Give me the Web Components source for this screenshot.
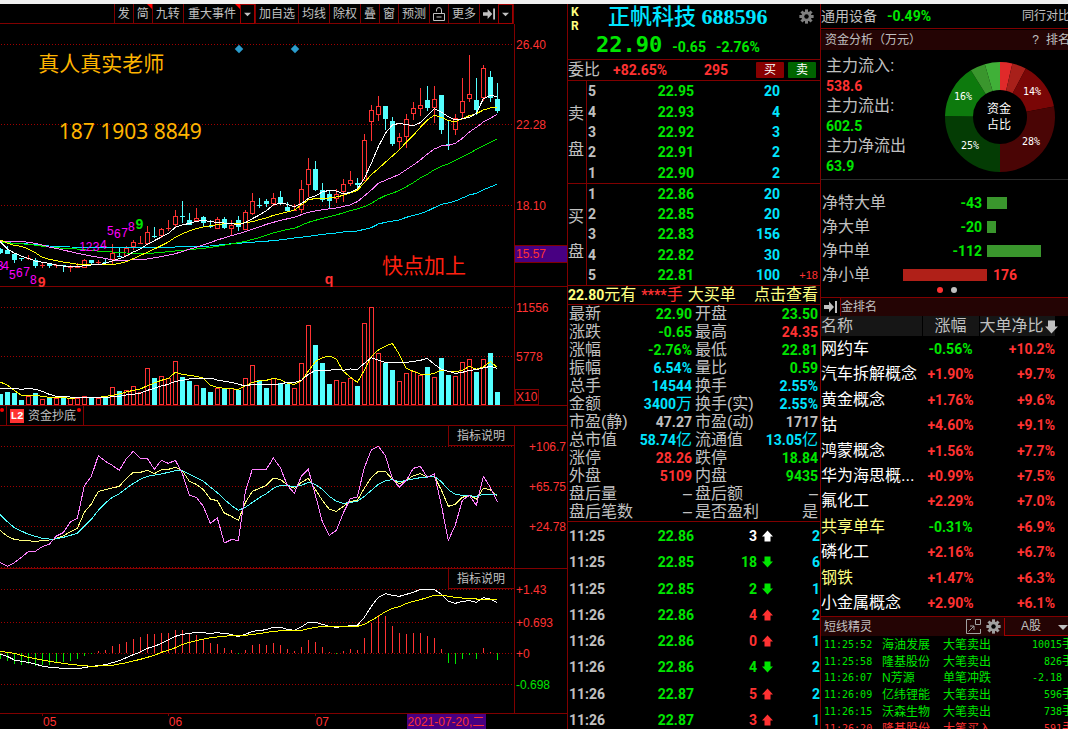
<!DOCTYPE html>
<html lang="zh-CN">
<head>
<meta charset="utf-8">
<title>正帆科技 688596</title>
<style>
html{background:#000}
body{margin:0;background:#000;overflow:hidden;
  --line:#800000;--gray:#c0c0c0;--red:#ff3232;--green:#00e600;--cyan:#00e5ff;--pale:#ffff80;--head:#240404;
  --ui:"Liberation Sans","Noto Sans CJK SC",sans-serif;
  --cn:"Liberation Sans","Noto Sans CJK SC",sans-serif;
  --num:Roboto,"Noto Sans CJK SC",sans-serif;
  --mono:"DejaVu Sans Mono","Noto Sans CJK SC",monospace}
</style>
</head>
<body>
<stock-terminal></stock-terminal>
<script>
const base = `*{box-sizing:border-box}
:host{display:block;flex:none;box-sizing:border-box;color:var(--gray);font:12px/16px var(--ui)}
button{margin:0;padding:0;border:0;background:none;color:inherit;font:inherit;cursor:pointer;white-space:nowrap}
a{color:inherit;text-decoration:none;white-space:nowrap}
table{border-collapse:collapse;border-spacing:0;width:100%}
td,th{padding:0;font-weight:inherit;text-align:left;white-space:nowrap}
i{font-style:normal}
.n{font:bold 14px/16px var(--num)}
.c{font:16px/18px var(--cn)}
.r{color:var(--red)}.g{color:var(--green)}.b{color:var(--cyan)}.w{color:#fff}.y{color:var(--pale)}.k{color:var(--gray)}`;

function define(name, css, html) {
  customElements.define(name, class extends HTMLElement {
    constructor() {
      super();
      this.attachShadow({mode: 'open'}).innerHTML =
        `<style>${base}${css}</style>` + (typeof html === 'function' ? html(this) : html);
    }
  });
}

const gear = (s, c) => `<svg width="${s}" height="${s}" viewBox="-10 -10 20 20" aria-hidden="true"><g fill="${c}">${
  [0,45,90,135].map(a => `<rect x="-2" y="-9.5" width="4" height="19" transform="rotate(${a})"/>`).join('')
  }</g><circle r="5" fill="none" stroke="${c}" stroke-width="3.6"/><circle r="3" fill="#000"/></svg>`;
const arrow = (dir, c) => `<svg width="11" height="12" viewBox="0 0 11 12" aria-hidden="true"><path fill="${c}" d="${
  dir === 'up' ? 'M5.5 0.5L11 6.5H8.5V11.5H2.5V6.5H0Z' : 'M5.5 11.5L0 5.5H2.5V0.5H8.5V5.5H11Z'}"/></svg>`;
const jump = `<svg width="13" height="12" viewBox="0 0 13 12" aria-hidden="true"><path fill="#c0c0c0" d="M0 4H5V0.5L10 6L5 11.5V8H0ZM11 0H13V12H11Z"/></svg>`;
const caret = `<svg width="8" height="5" viewBox="0 0 8 5" aria-hidden="true"><path fill="#c0c0c0" d="M0 0.5H8L4 4.5Z"/></svg>`;

/* ---------- toolbar ---------- */
define('chart-toolbar', `
:host{display:grid;grid-template-columns:minmax(0,1fr) 53px}
nav{display:flex;justify-content:flex-end;border-right:1px solid var(--line)}
button{position:relative;border:solid var(--line);border-width:0 0 1px 1px;padding:0 3px;font:12px/18px var(--cn);display:flex;align-items:center;justify-content:center}
.pad{flex:1;border-bottom:1px solid var(--line)}
.wide{padding:0 4px}
.drop{width:15px;border:1px solid #a00000}
.hot::after{content:"";position:absolute;right:0;top:0;border:0 solid transparent;border-left-width:5px;border-top:5px solid #f00}
.icon{width:19px}
`, `<nav><span class="pad"></span><button>发</button><button class="hot">简</button><button>九转</button><button class="wide hot">重大事件</button><button class="drop" aria-label="展开">${caret}</button><button>加自选</button><button>均线</button><button>除权</button><button>叠</button><button>窗</button><button>预测</button><button class="icon" aria-label="锁定"><svg width="12" height="14" viewBox="0 0 12 14"><path d="M0.5 6.5H11.5V13.5H0.5ZM3.5 4.5V3Q3.5 0.5 6 0.5T8.5 3V6.5M3.5 10H8.5" fill="none" stroke="#c0c0c0"/></svg></button><button>更多</button><button class="icon" aria-label="跳到最新">${jump}</button><button class="drop" aria-label="更多选项">${caret}</button></nav>`);

/* ---------- charts: one bar every 21 units, 3 units per pixel ---------- */
const STEP = 21;
const candles = `c744,747,760,762 c740,750,762,762 c762,762,780,789 c774,774,777,783 r765,774,777,780 c774,780,798,804 r790,795,798,804 c790,790,798,804 r792,795,798,804 c795,795,798,816 r797,801,804,816 r790,801,804,804 r778,780,803,803 c780,780,789,795 r780,786,789,792 c774,786,789,795 r732,759,781,795 c744,768,771,770 r738,744,768,768 r720,726,741,750 r708,729,732,732 r678,696,731,735 c681,708,711,714 r684,687,708,714 r660,684,687,692 r630,648,674,684 c603,648,651,668 c639,660,675,675 r624,654,663,664 c648,651,669,681 c660,678,681,684 r651,657,686,686 c651,657,685,687 r660,677,686,704 c648,660,681,692 r630,636,689,690 r579,603,643,645 c594,615,618,624 c597,603,612,622 r579,594,612,617 c573,591,612,615 c606,621,633,636 r612,630,633,633 r540,567,629,638 r474,507,554,592 c483,507,570,572 c549,570,599,606 c572,582,602,625 r567,582,596,608 r537,552,575,606 r513,540,551,558 c534,549,555,567 r402,420,542,544 r315,330,365,423 r288,318,344,363 c318,318,357,390 c351,363,432,438 r400,411,425,448 r342,357,410,444 r306,324,341,360 r264,315,326,348 c258,300,324,333 r258,297,323,368 c285,285,390,402 c363,432,435,450 r342,354,389,405 r234,303,338,356 r165,282,296,306 c234,300,329,345 r195,204,293,303 c213,231,293,306 c249,297,333,339`
  .split(' ').map(t => [t[0], ...t.slice(1).split(',').map(Number)]);
const volumes = [327,321,324,345,334,324,342,338,340,338,340,340,333,338,340,333,306,318,315,303,321,249,279,273,279,228,276,288,300,309,321,309,309,309,315,279,240,285,309,279,294,297,309,234,120,180,234,297,285,291,279,303,114,66,204,234,255,288,264,258,270,246,276,219,270,273,231,222,261,222,204,321];
const macd = [702,708,717,720,717,723,720,720,714,711,708,702,693,687,678,675,663,657,651,642,636,627,627,624,624,615,615,627,630,642,654,657,669,675,687,675,660,657,660,654,660,672,678,666,645,651,666,681,687,678,672,675,639,594,571,573,603,624,627,624,624,633,639,672,714,717,702,690,702,669,681,705];
const colour = {r: '#ff3232', c: '#54ffff'};
const snap = v => Math.floor(v / 3) * 3;

function candle([k, hi, top, bot, lo], i) {
  const x = i * STEP, t = snap(top), b = Math.max(t + 3, snap(bot + 1)), c = colour[k];
  const wick = (a, z) => z > a ? `<rect x="${x}" y="${a}" width="3" height="${z - a}" fill="${c}"/>` : '';
  const body = k === 'r' && b - t > 5
    ? `<rect x="${x - 4.5}" y="${t + 1.5}" width="12" height="${b - t - 3}" fill="none" stroke="${c}" vector-effect="non-scaling-stroke"/>`
    : `<rect x="${x - 6}" y="${t}" width="15" height="${b - t}" fill="${c}"/>`;
  return wick(snap(hi), t) + wick(b, snap(lo + 1)) + body;
}
function volume(v, i) {
  const k = candles[i][0], x = i * STEP, t = snap(v), c = colour[k];
  return k === 'r'
    ? `<rect x="${x - 4.5}" y="${t + 1.5}" width="12" height="${357 - t}" fill="#000" stroke="${c}" vector-effect="non-scaling-stroke"/>`
    : `<rect x="${x - 6}" y="${t}" width="15" height="${360 - t}" fill="${c}"/>`;
}
function stick(v, i) {
  const x = i * STEP, y = snap(v);
  return y < 684 ? `<rect x="${x}" y="${y}" width="3" height="${684 - y}" fill="#ff3232"/>`
                 : `<rect x="${x}" y="684" width="3" height="${Math.max(3, y - 684)}" fill="#00e600"/>`;
}
const panels = {
  price: {
    top: 72, height: 786, grid: [133, 373, 616],
    marks: () => candles.map(candle).join(''),
    lines: {
      '#00e5ff': '0,727 85,732 148,738 211,741 295,742 505,742 568,739 631,738 673,733 715,730 778,725 820,722 862,717 883,714 925,709 967,703 1009,699 1051,693 1072,693 1114,683 1135,672 1156,667 1198,660 1219,652 1261,641 1282,633 1324,613 1345,609 1366,603 1408,585 1429,580 1450,569 1471,561 1492,552',
      '#00e600': '0,727 43,730 85,733 148,741 190,745 232,747 274,752 337,756 379,759 421,760 463,759 505,755 547,751 610,745 652,739 694,732 736,724 778,713 820,699 862,688 883,685 925,667 967,655 1009,645 1051,632 1072,627 1093,620 1114,610 1135,597 1156,587 1177,580 1198,571 1219,560 1240,548 1261,534 1282,523 1303,509 1324,499 1345,492 1366,481 1387,471 1408,460 1429,448 1450,438 1471,427 1492,417',
      '#ff80ff': '0,724 64,724 106,730 127,735 148,741 190,750 232,760 274,768 316,775 337,780 358,782 442,777 484,770 526,761 568,748 610,735 652,720 694,707 736,695 778,681 799,673 841,661 883,652 904,644 925,637 967,629 1009,624 1050,615 1072,605 1093,588 1114,570 1135,550 1156,541 1177,532 1198,523 1219,509 1240,495 1261,480 1282,462 1303,447 1324,438 1345,436 1366,430 1387,415 1408,396 1429,382 1450,366 1471,355 1492,342',
      '#ffff00': '0,720 22,729 43,736 64,739 85,747 106,758 127,772 148,778 169,782 190,786 211,789 232,793 253,795 295,794 316,795 337,794 358,790 379,785 400,776 421,766 442,757 463,747 484,737 505,726 526,712 547,701 568,693 589,686 610,681 631,677 652,674 673,671 715,671 736,668 757,665 778,659 799,654 820,646 841,641 862,636 883,630 904,615 925,600 946,595 967,595 988,594 1009,591 1030,586 1051,579 1072,571 1093,548 1114,524 1135,506 1156,487 1177,468 1198,450 1219,426 1240,406 1261,382 1282,360 1303,346 1324,352 1345,362 1366,365 1387,356 1408,347 1429,341 1450,330 1471,324 1492,322',
      '#ffffff': '0,724 22,747 43,759 64,768 85,775 106,783 127,787 148,790 169,795 190,798 211,800 240,799 253,797 274,795 295,794 316,790 337,783 358,776 379,768 400,756 421,747 442,733 463,722 484,711 505,700 526,682 547,675 568,670 589,664 610,661 631,665 652,667 673,669 694,671 715,674 736,668 757,656 778,645 799,632 820,615 841,609 862,613 883,620 904,611 925,595 946,588 967,576 988,571 1009,573 1030,582 1051,577 1072,567 1093,535 1114,490 1135,440 1156,400 1177,375 1198,370 1219,374 1240,377 1261,368 1282,347 1303,326 1324,336 1345,350 1366,360 1387,356 1408,352 1429,340 1450,296 1471,286 1492,290'
    }
  },
  volume: {
    top: 6, height: 354, grid: [67, 214],
    marks: () => volumes.map(volume).join(''),
    lines: {
      '#ffff00': '0,291 22,300 43,316 64,331 106,331 148,337 190,338 211,340 253,337 295,337 337,331 358,327 379,321 400,316 421,312 442,302 463,294 484,286 505,280 526,262 547,268 568,271 589,274 610,279 631,301 652,307 673,310 715,313 736,303 757,292 778,288 799,286 820,280 841,284 862,295 883,298 904,288 925,258 946,230 967,218 988,213 1009,222 1030,259 1051,276 1072,292 1093,256 1114,215 1135,195 1156,184 1177,175 1198,208 1219,250 1240,259 1261,267 1282,269 1303,265 1324,255 1345,259 1366,260 1387,256 1408,244 1429,253 1450,246 1471,230 1492,247',
      '#ffffff': '0,310 43,310 64,313 85,310 106,313 127,319 148,328 169,334 232,337 316,337 358,334 379,330 421,325 442,316 463,310 484,303 505,298 526,289 547,286 568,282 631,279 652,285 694,292 736,303 757,298 841,297 862,292 883,293 904,286 925,268 946,256 988,256 1009,252 1030,256 1051,252 1072,253 1093,235 1114,218 1135,225 1156,232 1219,232 1240,229 1261,226 1282,220 1303,238 1324,253 1345,259 1366,265 1387,262 1408,256 1429,254 1450,249 1471,244 1492,250'
    }
  },
  kdj: {
    top: 3, height: 426, grid: [64, 184, 304, 427],
    marks: () => '',
    lines: {
      '#ffff80': '0,316 22,334 43,343 64,346 106,349 158,344 190,333 211,320 232,310 253,262 274,237 295,199 316,194 358,184 379,160 400,142 421,142 442,136 463,146 484,134 505,133 526,127 547,137 568,169 589,178 610,194 631,222 652,227 673,264 694,274 715,286 736,233 757,199 778,190 799,181 820,160 841,163 862,180 883,190 904,172 925,160 946,193 967,226 988,253 1009,259 1030,244 1051,229 1072,226 1093,190 1114,157 1135,139 1156,139 1177,163 1198,176 1219,166 1240,152 1261,146 1282,156 1303,154 1324,195 1345,244 1366,238 1387,217 1408,211 1429,222 1450,190 1471,194 1492,214',
      '#54ffff': '0,268 22,290 43,308 64,318 85,328 127,340 158,343 190,337 232,325 253,304 274,283 295,256 316,234 337,217 358,206 379,190 400,175 421,163 442,154 484,147 526,137 547,137 568,148 610,169 631,186 652,203 673,223 694,241 715,256 736,247 778,218 799,206 820,190 841,181 883,184 904,181 925,172 946,178 967,193 988,214 1009,229 1030,235 1051,232 1072,229 1093,214 1114,196 1135,178 1156,167 1177,164 1198,170 1219,166 1261,158 1303,154 1324,170 1345,194 1366,208 1387,211 1429,214 1450,208 1492,208',
      '#ff80ff': '0,412 22,424 43,413 64,397 85,380 106,379 127,365 148,358 169,333 190,323 211,291 232,280 253,182 274,154 295,92 316,109 337,121 358,136 379,101 400,79 421,100 442,100 463,133 484,106 505,115 526,106 547,145 568,211 589,217 610,244 631,295 652,279 673,354 694,344 715,346 736,200 757,133 799,133 820,99 841,128 862,181 883,205 904,154 925,133 946,210 967,290 988,331 1009,316 1030,264 1051,221 1072,216 1093,128 1114,75 1135,64 1156,92 1177,160 1198,187 1219,166 1240,130 1261,124 1282,157 1303,147 1324,240 1345,346 1366,300 1387,226 1408,211 1429,241 1450,154 1471,187 1492,230'
    }
  },
  macd: {
    top: 432, height: 432, grid: [493, 592, 685, 777],
    marks: () => macd.map(stick).join(''),
    lines: {
      '#ffffff': '0,687 22,694 43,705 85,712 127,723 148,727 190,730 240,730 274,724 295,722 316,719 358,707 400,689 421,681 442,670 463,664 484,655 505,645 526,634 547,628 589,622 631,625 652,623 694,628 715,635 736,628 757,619 799,614 820,607 841,607 862,613 883,616 904,606 925,592 946,592 967,598 988,604 1009,607 1030,604 1072,601 1093,577 1114,544 1135,517 1156,506 1177,511 1198,514 1219,508 1240,502 1261,493 1303,493 1324,508 1345,529 1366,535 1387,529 1408,527 1429,532 1450,518 1471,522 1492,533',
      '#ffff00': '0,679 43,685 85,697 148,709 211,718 274,724 337,721 379,713 421,703 463,691 484,682 505,676 526,668 547,658 589,647 631,638 673,634 694,631 736,631 778,626 820,619 862,616 904,616 925,611 967,604 1072,604 1093,598 1135,574 1156,560 1177,550 1198,545 1219,535 1261,524 1303,511 1330,511 1366,517 1408,521 1450,523 1492,523'
    }
  }
};

/* kind = panel name, labels = "text@y@class" list for the axis; slotted children are notes on the plot */
define('chart-panel', `
:host{display:grid;grid-template-columns:minmax(0,1fr) 52px;border-bottom:1px solid var(--line);min-height:0}
.plot{position:relative;border-right:1px solid var(--line);min-width:0;min-height:0}
.plot svg{display:block;width:100%;height:100%;position:absolute;inset:0}
.axis{position:relative;min-width:0}
.axis span{position:absolute;left:1px;transform:translateY(-50%);line-height:14px;color:var(--red);white-space:nowrap}
.axis .end{left:auto;right:1px}
.axis .g{color:var(--green)}
.axis .cursor{left:0;right:0;background:#480082;border:solid var(--line);border-width:1px 0;padding:0 1px;line-height:16px;height:18px}
.axis .unit{left:0;border:1px solid var(--line);padding:0 1px 0 0;transform:none;bottom:0;line-height:14px}
`, el => {
  const p = panels[el.getAttribute('kind')];
  const pct = y => ((y - p.top) / p.height * 100) + '%';
  const labels = el.getAttribute('labels').split(' ').map(s => {
    const [text, y, cls = ''] = s.split('@');
    return `<span class="${cls}"${y ? ` style="top:${pct(+y)}"` : ''}>${text}</span>`;
  }).join('');
  return `<div class="plot"><svg viewBox="0 ${p.top} 1542 ${p.height}" preserveAspectRatio="none" shape-rendering="crispEdges">${
    p.grid.map(y => `<path d="M3 ${snap(y) + 1.5}H1536" stroke="#a00000" stroke-dasharray="1 2" vector-effect="non-scaling-stroke"/>`).join('')}${
    p.marks()}${
    Object.entries(p.lines).map(([c, pts]) => `<polyline points="${pts}" fill="none" stroke="${c}" vector-effect="non-scaling-stroke"/>`).join('')
  }</svg><slot></slot></div><div class="axis">${labels}</div>`;
});

/* note pinned to a place of the plot: x and y in percent of its area */
define('chart-note', `
:host{position:absolute;left:var(--x);top:var(--y);transform:translate(-50%,-50%);white-space:nowrap;color:#ff00ff;line-height:14px}
:host([kind=big]){font:21px/26px "Noto Sans","Noto Sans CJK SC",sans-serif;color:#ffb400}
:host([kind=alert]){font:21px/26px var(--cn);color:#ff2010}
:host([kind=green]){color:#00e600;font:bold 14px/14px var(--ui)}
:host([kind=red]){color:#ff3232;font:bold 14px/14px var(--ui)}
:host([kind=gem]){width:6px;height:6px;background:#2a9ccc;transform:translate(-50%,-50%) rotate(45deg)}
`, '<slot></slot>');

define('explain-button', `
:host{position:absolute;right:0;top:0}
button{border:solid var(--line);border-width:0 0 1px 1px;background:#000;height:20px;padding:0 9px 0 8px;font:12px/18px var(--cn)}
`, '<button><slot></slot></button>');

define('fund-tabs', `
:host{border-bottom:1px solid var(--line);display:flex;padding-left:6px}
button{position:relative;border:solid var(--line);border-width:0 1px;display:flex;align-items:center;gap:4px;padding:0 7px 0 3px;font:12px/18px var(--cn)}
i{background:#ff3232;color:#fff;font:bold 11px/14px "Liberation Mono",monospace;width:14px;height:14px;text-align:center}
button::before,button::after{content:"";position:absolute;width:4px;height:4px;border-radius:2px;background:#f00;top:2px}
button::before{left:-7px}button::after{right:2px}
`, '<button><i>L2</i>资金抄底</button>');

define('date-axis', `
:host{position:relative;overflow:hidden}
span{position:absolute;top:0;left:var(--x);border-left:1px solid transparent;border-image:linear-gradient(var(--line) 3px,transparent 3px) 1;color:var(--red);line-height:16px;white-space:nowrap}
.now{background:#480082;border:0;padding:0 2px 0 1px;border-image:none}
`, '<span style="--x:7.4%">05</span><span style="--x:29.6%">06</span><span style="--x:55.5%">07</span><span class="now" style="--x:71.7%">2021-07-20,二</span>');

const note = (x, y, text, kind = '') => `<chart-note kind="${kind}" style="--x:${(x / 15.42).toFixed(2)}%;--y:${((y - 72) / 7.86).toFixed(2)}%">${text}</chart-note>`;
define('chart-column', `
:host{display:grid;grid-template-rows:20px minmax(0,263fr) minmax(0,119fr) 20px minmax(0,143fr) minmax(0,145fr) 15px;border-right:1px solid var(--line);min-width:0;min-height:0;overflow:hidden}
`, `<chart-toolbar></chart-toolbar>
<chart-panel kind="price" labels="26.40@134 22.28@374 18.10@617 15.57@762@cursor">${
  note(304, 190, '真人真实老师', 'big') + note(391, 393, '187 1903 8849', 'big') + note(1272, 797, '快点加上', 'alert') +
  note(718, 146, '', 'gem') + note(886, 146, '', 'gem') +
  [[248,742,1],[267,742,2],[288,740,3],[310,734,4],[331,693,5],[352,701,6],[374,698,7],[394,681,8],[0,799,3],[17,799,4],[37,826,5],[58,820,6],[80,816,7],[100,840,8]].map(a => note(...a)).join('') +
  note(418, 673, '9', 'green') + note(125, 845, '9', 'red') + note(987, 838, 'q', 'red')}</chart-panel>
<chart-panel kind="volume" labels="11556@69 5778@216 X10@@unit"></chart-panel>
<fund-tabs></fund-tabs>
<chart-panel kind="kdj" labels="+106.7@66@end +65.75@186@end +24.78@306@end"><explain-button>指标说明</explain-button></chart-panel>
<chart-panel kind="macd" labels="+1.43@495 +0.693@594 +0@687 -0.698@780@g"><explain-button>指标说明</explain-button></chart-panel>
<date-axis></date-axis>`);

/* ---------- quote column ---------- */
define('quote-head', `
:host{height:56px;border-bottom:1px solid var(--line);display:grid;grid-template-columns:28px 1fr 21px}
.kr{font:bold 12px/14px var(--num);color:var(--pale);padding:1px 0 0 3px}
h1{margin:0;font:500 22px/26px "Liberation Serif","Noto Sans CJK SC",serif;color:var(--cyan);white-space:nowrap;padding-left:12px}
h1 b{font-weight:bold}
.p{display:flex;align-items:baseline;gap:10px;line-height:30px}
.p b{font:bold 22px/30px "DejaVu Sans Mono",monospace}
button{align-self:start;justify-self:start;padding-top:5px}
`, `<div class="kr">K<br>R</div><div><h1>正帆科技 <b>688596</b></h1><div class="p g"><b>22.90</b><span class="n">-0.65</span><span class="n">-2.76%</span></div></div><button aria-label="设置">${gear(15, '#808080')}</button>`);

define('ratio-row', `
:host{height:21px;border-bottom:1px solid var(--line);display:grid;grid-template-columns:45px 91px 1fr 28px 32px;align-items:center;padding-right:4px}
button{height:16px;color:#fff;font:12px/16px var(--cn);border-radius:1px;width:28px}
.buy{background:#880000}
.sell{background:#006400;justify-self:end}
`, `<span class="c">委比</span><span class="n r">+82.65%</span><span class="n r">295</span><button class="buy">买</button><button class="sell">卖</button>`);

define('order-side', `
:host{height:103px;border-bottom:1px solid var(--line);display:grid;grid-template-columns:19px 1fr}
:host([side="买盘"]){height:102px}
.s{border-right:1px solid var(--line);display:flex;flex-direction:column;justify-content:space-evenly;padding:7px 0}
.rows{display:grid;grid-auto-rows:1fr}
.row{display:grid;grid-template-columns:20px 1fr 86px 40px;align-items:center;text-align:right;padding-left:1px}
.row :first-child{text-align:left}
small{font:11px/14px var(--ui);padding-right:2px}
`, el => `<div class="s c">${[...el.getAttribute('side')].map(c => `<span>${c}</span>`).join('')}</div><div class="rows">${
  el.getAttribute('rows').split(' ').map(r => { const [l, p, v, x = ''] = r.split(',');
    return `<div class="row n"><span>${l}</span><span class="g">${p}</span><span class="b">${v}</span><small class="r">${x}</small></div>`; }).join('')}</div>`);

define('hint-row', `
:host{height:19px;border-bottom:1px solid var(--line);display:flex;align-items:center;color:var(--pale);white-space:pre}
:host>*{flex:none}
.r{margin:0 5px}
a{margin-left:auto;padding-right:2px}
`, `<span class="n">22.80</span><span class="c">元有</span><span class="c r"><span class="n">****</span>手</span><span class="c">大买单</span><a class="c" href="#orders">点击查看</a>`);

define('quote-stats', `
:host{border-bottom:1px solid var(--line);height:217px}
table{table-layout:fixed}
tr{height:18px}
th{padding-left:1px;font:16px/18px var(--cn)}
td{text-align:right;padding-right:2px}
td.n{line-height:18px}
td i{font:16px/16px var(--cn)}
col:nth-child(odd){width:58px}
`, () => {
  const rows = [['最新','22.90','g','开盘','23.50','g'],['涨跌','-0.65','g','最高','24.35','r'],['涨幅','-2.76%','g','最低','22.81','g'],['振幅','6.54%','b','量比','0.59','g'],['总手','14544','b','换手','2.55%','b'],['金额','3400万','b','换手(实)','2.55%','b'],['市盈(静)','47.27','k','市盈(动)','1717','k'],['总市值','58.74亿','b','流通值','13.05亿','b'],['涨停','28.26','r','跌停','18.84','g'],['外盘','5109','r','内盘','9435','g'],['盘后量','–','k','盘后额','–','k'],['盘后笔数','–','k','是否盈利','是','k']];
  const v = s => s.replace(/[万亿是–]/, m => `<i>${m}</i>`);
  return `<table><colgroup><col><col><col><col></colgroup>${rows.map(r => `<tr><th>${r[0]}</th><td class="n ${r[2]}">${v(r[1])}</td><th>${r[3]}</th><td class="n ${r[5]}">${v(r[4])}</td></tr>`).join('')}</table>`;
});

define('tick-list', `
:host{min-height:211px;display:grid;grid-auto-rows:1fr;padding-top:1px}
.t{display:grid;grid-template-columns:38px 87px 63px 22px 1fr;align-items:center;text-align:right;padding-left:1px}
.t :first-child{text-align:left}
.t svg{justify-self:end;margin-right:6px}
`, () => [['11:25','22.86',3,'up','w',2],['11:25','22.85',18,'down','g',6],['11:25','22.85',2,'down','g',1],['11:26','22.86',4,'up','r',2],['11:26','22.86',0,'up','r',1],['11:26','22.86',4,'down','g',2],['11:26','22.87',5,'up','r',2],['11:26','22.87',3,'up','r',1]]
  .map(([t, p, q, d, c, n]) => `<div class="t n"><span>${t}</span><span class="g">${p}</span><span class="${c}">${q}</span>${arrow(d, {w:'#fff',g:'#00e600',r:'#ff3232'}[c])}<span class="b">${n}</span></div>`).join(''));

define('quote-column', `
:host{display:flex;flex-direction:column;border-right:1px solid var(--line);min-height:0;overflow:hidden}
`, `<quote-head></quote-head><ratio-row></ratio-row>
<order-side side="卖盘" rows="5,22.95,20 4,22.93,4 3,22.92,3 2,22.91,2 1,22.90,2"></order-side>
<order-side side="买盘" rows="1,22.86,20 2,22.85,20 3,22.83,156 4,22.82,30 5,22.81,100,+18"></order-side>
<hint-row></hint-row><quote-stats></quote-stats><tick-list></tick-list>`);

/* ---------- side column ---------- */
define('sector-row', `
:host{height:25px;border-bottom:1px solid var(--line);display:flex;align-items:center;white-space:nowrap;overflow:hidden}
.s{font:14px/18px var(--cn)}
.n{margin-left:10px}
a{margin-left:auto;font:12px/18px var(--cn);margin-right:-2px}
`, `<span class="s">通用设备</span><span class="n g">-0.49%</span><a href="#peers">同行对比</a>`);

define('panel-head', `
:host{display:flex;align-items:center;background:var(--head);height:20px;padding-left:4px;font:12px/18px var(--cn);white-space:nowrap;overflow:hidden}
`, '<slot></slot>');

function wedge([a, b, c]) {
  const pt = (r, d) => `${(r * Math.sin(d * Math.PI / 180)).toFixed(2)} ${(-r * Math.cos(d * Math.PI / 180)).toFixed(2)}`;
  return `<path fill="${c}" d="M${pt(55, a)}A55 55 0 0 1 ${pt(55, b)}L${pt(27, b)}A27 27 0 0 0 ${pt(27, a)}Z"/>`;
}
define('fund-flow', `
:host{display:flex;justify-content:space-between;height:130px;border-bottom:1px solid #2a2a2a;padding:6px 13px 0 5px}
dl{margin:0}dt{font:16px/20px var(--cn);white-space:nowrap}dd{margin:0}
dd.n{line-height:20px}
svg{margin-top:6px}
text{fill:#fff;font:10px "DejaVu Sans Mono",monospace;text-anchor:middle}
.m{font:12px "Noto Sans CJK SC",sans-serif}
`, `<dl><dt>主力流入:</dt><dd class="n r">538.6</dd><dt>主力流出:</dt><dd class="n g">602.5</dd><dt>主力净流出</dt><dd class="n g">63.9</dd></dl>
<svg width="110" height="110" viewBox="-55 -55 110 110">${[[0,13,'#e02a2a'],[13,28,'#a8201a'],[28,79,'#7a0606'],[79,180,'#4a0505'],[180,271,'#043c04'],[271,328,'#0d7a0d'],[328,344,'#3a962d'],[344,360,'#40b038']].map(wedge).join('')}
<text x="-37" y="-17">16%</text><text x="32" y="-22">14%</text><text x="31" y="28">28%</text><text x="-30" y="32">25%</text><text class="m" x="-1" y="-4">资金</text><text class="m" x="-1" y="12">占比</text></svg>`);

define('net-orders', `
:host{padding-top:11px;height:118px;border-bottom:1px solid var(--line)}
.row{display:grid;grid-template-columns:80px 85px 1fr;height:24px;align-items:center;padding-left:1px}
.left{display:flex;justify-content:flex-end;padding-right:5px}
.bar{height:12px;background:#3a962d;width:var(--w)}
.loss .left{padding:0}.loss .bar{background:#b02018}
.loss .n{padding-left:6px}
.dots{display:flex;gap:8px;justify-content:center;padding-left:5px}
.dots button{width:6px;height:6px;border-radius:3px;background:#ff3232}
.dots button+button{background:#c0c0c0}
`, `${[['净特大单','-43',20],['净大单','-20',9],['净中单','-112',54]].map(([l, v, w]) => `<div class="row"><span class="c">${l}</span><span class="left n g">${v}</span><span class="bar" style="--w:${w}px"></span></div>`).join('')}
<div class="row loss"><span class="c">净小单</span><span class="left"><span class="bar" style="--w:84px"></span></span><span class="n r">176</span></div>
<div class="dots"><button aria-label="第一页"></button><button aria-label="第二页"></button></div>`);

define('sector-rank', `
:host{border-bottom:1px solid var(--line)}
table{table-layout:fixed;width:100%;height:300px}
thead th{height:20px;background:#161616;font:16px/20px var(--cn);border-right:1px solid #000}
thead th:nth-child(2){text-align:center}
thead th:nth-child(3){position:relative;border:0}
thead svg{position:absolute;right:-3px;top:4px;width:13px;height:14px}
tbody td:nth-child(2){text-align:center}
tbody td:nth-child(3){text-align:right}
.w,.y{font:16px/18px var(--cn)}
`, () => `<table><colgroup><col><col style="width:57px"><col style="width:76px"><col style="width:13px"></colgroup><thead><tr><th>名称</th><th>涨幅</th><th>大单净比${arrow('down', '#c0c0c0')}</th><td></td></tr></thead><tbody>${
  [['网约车','-0.56%','+10.2%'],['汽车拆解概念','+1.90%','+9.7%'],['黄金概念','+1.76%','+9.6%'],['钴','+4.60%','+9.1%'],['鸿蒙概念','+1.56%','+7.7%'],['华为海思概...','+0.99%','+7.5%'],['氟化工','+2.29%','+7.0%'],['共享单车','-0.31%','+6.9%',1],['磷化工','+2.16%','+6.7%'],['钢铁','+1.47%','+6.3%',1],['小金属概念','+2.90%','+6.1%']]
  .map(([n, a, b, y]) => `<tr><td class="${y ? 'y' : 'w'}">${n}</td><td class="n ${a[0] === '-' ? 'g' : 'r'}">${a}</td><td class="n r">${b}</td><td></td></tr>`).join('')}</tbody></table>`);

define('alert-list', `
:host{overflow:hidden;height:100px;margin-right:-6px}
table{table-layout:fixed;height:99px}
td{font:12px/16px var(--cn)}
td:nth-child(1),td:nth-child(4){font:10px/16px var(--mono)}
td i{font:12px/16px var(--cn)}
td:nth-child(1){padding-left:3px;width:61px}td:nth-child(2){width:61px}
td:nth-child(4){text-align:right}
`, () => `<table>${[['11:25:52','海油发展','大笔卖出','10015手'],['11:25:58','隆基股份','大笔卖出','826手'],['11:26:07','N芳源','单笔冲跌','-2.18'],['11:26:09','亿纬锂能','大笔卖出','596手'],['11:26:15','沃森生物','大笔卖出','738手'],['11:26:20','隆基股份','大笔买入','591手']]
  .map((r, i) => `<tr class="${i === 5 ? 'r' : 'g'}">${r.map((c, j) => `<td${c === '-2.18' ? ' style="padding-right:12px"' : ''}>${j === 3 ? c.replace('手', '<i>手</i>') : c}</td>`).join('')}</tr>`).join('')}</table>`);

define('side-column', `
:host{display:flex;flex-direction:column;min-height:0;min-width:0;overflow:hidden}
.fund{margin-top:1px}
.end{margin-left:auto;display:flex;gap:7px}
.end button:last-child{margin-right:-2px}
.rank{height:18px;padding-left:0}
.go{width:20px;height:18px;background:#000;border-right:1px solid var(--line);display:flex;align-items:center;justify-content:center}
.sprite{height:19px;padding-left:3px}
.tools{margin-left:auto;display:flex;align-items:center;gap:5px}
.pick{position:relative;display:block;width:64px;height:18px;margin-left:-2px}
select{appearance:none;width:100%;height:18px;border:1px solid #a00000;border-top:0;border-right:0;background:var(--head);color:var(--gray);font:12px/16px var(--cn);padding:0 0 0 16px;margin:0;border-radius:0;display:block}
.pick svg{position:absolute;right:0;top:7px}
.tools button{display:flex}
`, `<sector-row></sector-row>
<panel-head class="fund"><span>资金分析（万元）</span><span class="end"><button>?</button><button>排名</button></span></panel-head>
<fund-flow></fund-flow><net-orders></net-orders>
<panel-head class="rank"><button class="go" aria-label="跳转">${jump}</button><span>金排名</span></panel-head>
<sector-rank></sector-rank>
<panel-head class="sprite"><span>短线精灵</span><span class="tools"><button aria-label="弹出"><svg width="15" height="15" viewBox="0 0 15 15"><path d="M5 0.5H0.5V14.5H14.5V10M9.5 0.5H14.5V5.5H9.5ZM2.5 12.5L8 7M4 7H8V11" fill="none" stroke="#a0a0a0"/></svg></button><button aria-label="设置">${gear(15, '#a0a0a0')}</button><label class="pick"><select aria-label="市场"><option>A股</option></select><svg width="10" height="5" viewBox="0 0 10 5"><path fill="#c0c0c0" d="M0 0H10L5 5Z"/></svg></label></span></panel-head>
<alert-list></alert-list>`);

define('stock-terminal', `
:host{display:grid;height:100vh;grid-template:4px minmax(0,1fr) / minmax(0,1fr) 253px 247px;background:#000;overflow:hidden}
.strip{grid-column:1/-1;background:#f0f0f0}
`, `<div class="strip"></div><chart-column></chart-column><quote-column></quote-column><side-column></side-column>`);
</script>
</body>
</html>
